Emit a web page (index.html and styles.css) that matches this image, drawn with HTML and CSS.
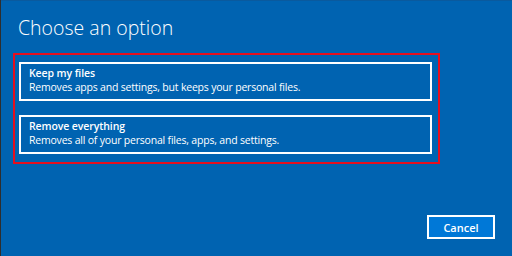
FILE: index.html
```html
<!DOCTYPE html>
<html lang="en">
<head>
<meta charset="utf-8">
<title>Choose an option</title>
<link rel="stylesheet" href="styles.css">
</head>
<body>
<div class="screen">
  <h1 class="title">Choose an option</h1>
  <div class="frame">
    <div class="option">
      <div class="opt-title">Keep my files</div>
      <div class="opt-desc">Removes apps and settings, but keeps your personal files.</div>
    </div>
    <div class="option">
      <div class="opt-title">Remove everything</div>
      <div class="opt-desc">Removes all of your personal files, apps, and settings.</div>
    </div>
  </div>
  <div class="actions">
    <button class="cancel">Cancel</button>
  </div>
</div>
</body>
</html>
```

FILE: styles.css
```css
html, body {
  margin: 0;
  padding: 0;
  height: 100%;
}
body {
  background: #0063b1;
  font-family: "Open Sans", "Noto Sans", sans-serif;
  color: #ffffff;
}
.screen {
  height: 256px;
  box-sizing: border-box;
  display: flex;
  flex-direction: column;
  box-shadow: inset 1px 0 0 #2e2e2e, inset 0 1px 0 #0a5a9e;
}
.title {
  margin: 16px 0 0 18px;
  font-size: 19.5px;
  line-height: 24px;
  font-weight: 300;
}
.frame {
  margin: 13px 0 0 13px;
  width: 427px;
  height: 111px;
  box-sizing: border-box;
  border: 2px solid #e50f1e;
  padding: 7px 6px 0 4px;
  display: flex;
  flex-direction: column;
  gap: 14px;
}
.option {
  border: 2px solid #ffffff;
  padding: 2px 8px 5px 8px;
  font-size: 10.5px;
  line-height: 14px;
  letter-spacing: -0.2px;
}
.opt-title {
  font-weight: 600;
  letter-spacing: -0.1px;
}
.opt-desc {
  font-weight: 400;
}
.actions {
  margin-top: auto;
  display: flex;
  justify-content: flex-end;
  padding: 0 17px 17px 0;
}
.cancel {
  width: 68px;
  height: 24px;
  box-sizing: border-box;
  background: #0078d7;
  border: 2px solid #ffffff;
  color: #ffffff;
  font-family: "Open Sans", "Noto Sans", sans-serif;
  font-size: 11px;
  font-weight: 600;
  padding: 0;
}
```
